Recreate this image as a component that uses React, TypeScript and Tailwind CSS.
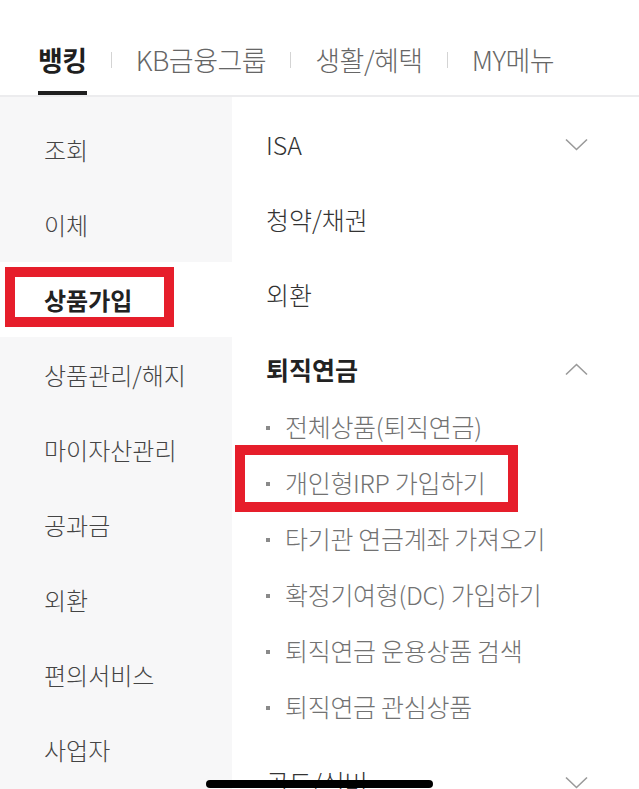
import React from 'react';

const leftMenu = ['조회', '이체', '상품가입', '상품관리/해지', '마이자산관리', '공과금', '외환', '편의서비스', '사업자'];

const pensionItems = [
  '전체상품(퇴직연금)',
  '개인형IRP 가입하기',
  '타기관 연금계좌 가져오기',
  '확정기여형(DC) 가입하기',
  '퇴직연금 운용상품 검색',
  '퇴직연금 관심상품',
];

function Chevron({ up = false }: { up?: boolean }) {
  return (
    <svg width="23" height="13" viewBox="0 0 23 13" fill="none" className={up ? 'rotate-180' : ''}>
      <polyline points="1,1.5 11.5,11.5 22,1.5" stroke="#9a9a9a" strokeWidth="1.6" />
    </svg>
  );
}

function Tab({ label, active = false }: { label: string; active?: boolean }) {
  return (
    <div
      className={
        'flex h-full items-center border-b-4 pt-[29px] text-[27px] tracking-[-0.5px] ' +
        (active ? 'border-[#1f1f1f] font-bold text-[#1f1f1f]' : 'border-transparent font-light text-[#666]')
      }
    >
      {label}
    </div>
  );
}

function Sep() {
  return (
    <div className="flex h-full items-center pb-[4px] pt-[29px]">
      <span className="mx-[24px] h-[16px] w-px bg-[#d4d4d4]" />
    </div>
  );
}

export default function App() {
  return (
    <div className="relative h-[789px] w-[639px] overflow-hidden bg-white font-['Noto_Sans_CJK_KR','Noto_Sans',sans-serif]">
      {/* top tabs */}
      <div className="flex h-[97px] border-b-2 border-[#ececee] pl-[38px]">
        <Tab label="뱅킹" active />
        <Sep />
        <Tab label="KB금융그룹" />
        <Sep />
        <Tab label="생활/혜택" />
        <Sep />
        <Tab label="MY메뉴" />
      </div>

      <div className="flex">
        {/* left menu */}
        <nav className="min-h-[692px] w-[232px] bg-[#f7f7f8] pt-[15px]">
          {leftMenu.map((item) => {
            const selected = item === '상품가입';
            return (
              <div
                key={item}
                className={
                  'relative flex h-[75px] items-center pl-[44px] text-[24px] ' +
                  (selected ? 'bg-white font-bold text-[#222]' : 'font-light text-[#444]')
                }
              >
                {item}
                {selected && (
                  <div className="absolute left-[5px] top-[5px] h-[60px] w-[169px] border-[10px] border-[#e61e2b]" />
                )}
              </div>
            );
          })}
        </nav>

        {/* right menu */}
        <div className="flex-1 pt-[10px]">
          <div className="flex h-[75px] items-center justify-between pl-[34px] pr-[51px] text-[25px] font-light text-[#333]">
            <span>ISA</span>
            <Chevron />
          </div>
          <div className="flex h-[75px] items-center pl-[34px] text-[25px] font-light text-[#333]">청약/채권</div>
          <div className="flex h-[75px] items-center pl-[34px] text-[25px] font-light text-[#333]">외환</div>
          <div className="flex h-[75px] items-center justify-between pl-[34px] pr-[51px] text-[25px] font-bold text-[#222]">
            <span>퇴직연금</span>
            <Chevron up />
          </div>
          <ul className="-mt-[8px] pb-[10px]">
            {pensionItems.map((item) => (
              <li key={item} className="relative flex h-[56px] items-center gap-[15px] pl-[34px] text-[25px] font-light tracking-[-0.3px] text-[#727272]">
                <span className="mt-[2px] h-[4px] w-[4px] shrink-0 bg-[#8a8a8a]" />
                {item}
                {item === '개인형IRP 가입하기' && (
                  <div className="absolute left-[3px] top-[-10px] h-[67px] w-[283px] border-[10px] border-[#e61e2b]" />
                )}
              </li>
            ))}
          </ul>
          <div className="flex h-[75px] items-center justify-between pl-[34px] pr-[51px] text-[25px] font-light text-[#333]">
            <span>골드/실버</span>
            <Chevron />
          </div>
        </div>
      </div>

      {/* home indicator */}
      <div className="absolute bottom-[1px] left-[206px] h-[8px] w-[227px] rounded-full bg-black" />
    </div>
  );
}
